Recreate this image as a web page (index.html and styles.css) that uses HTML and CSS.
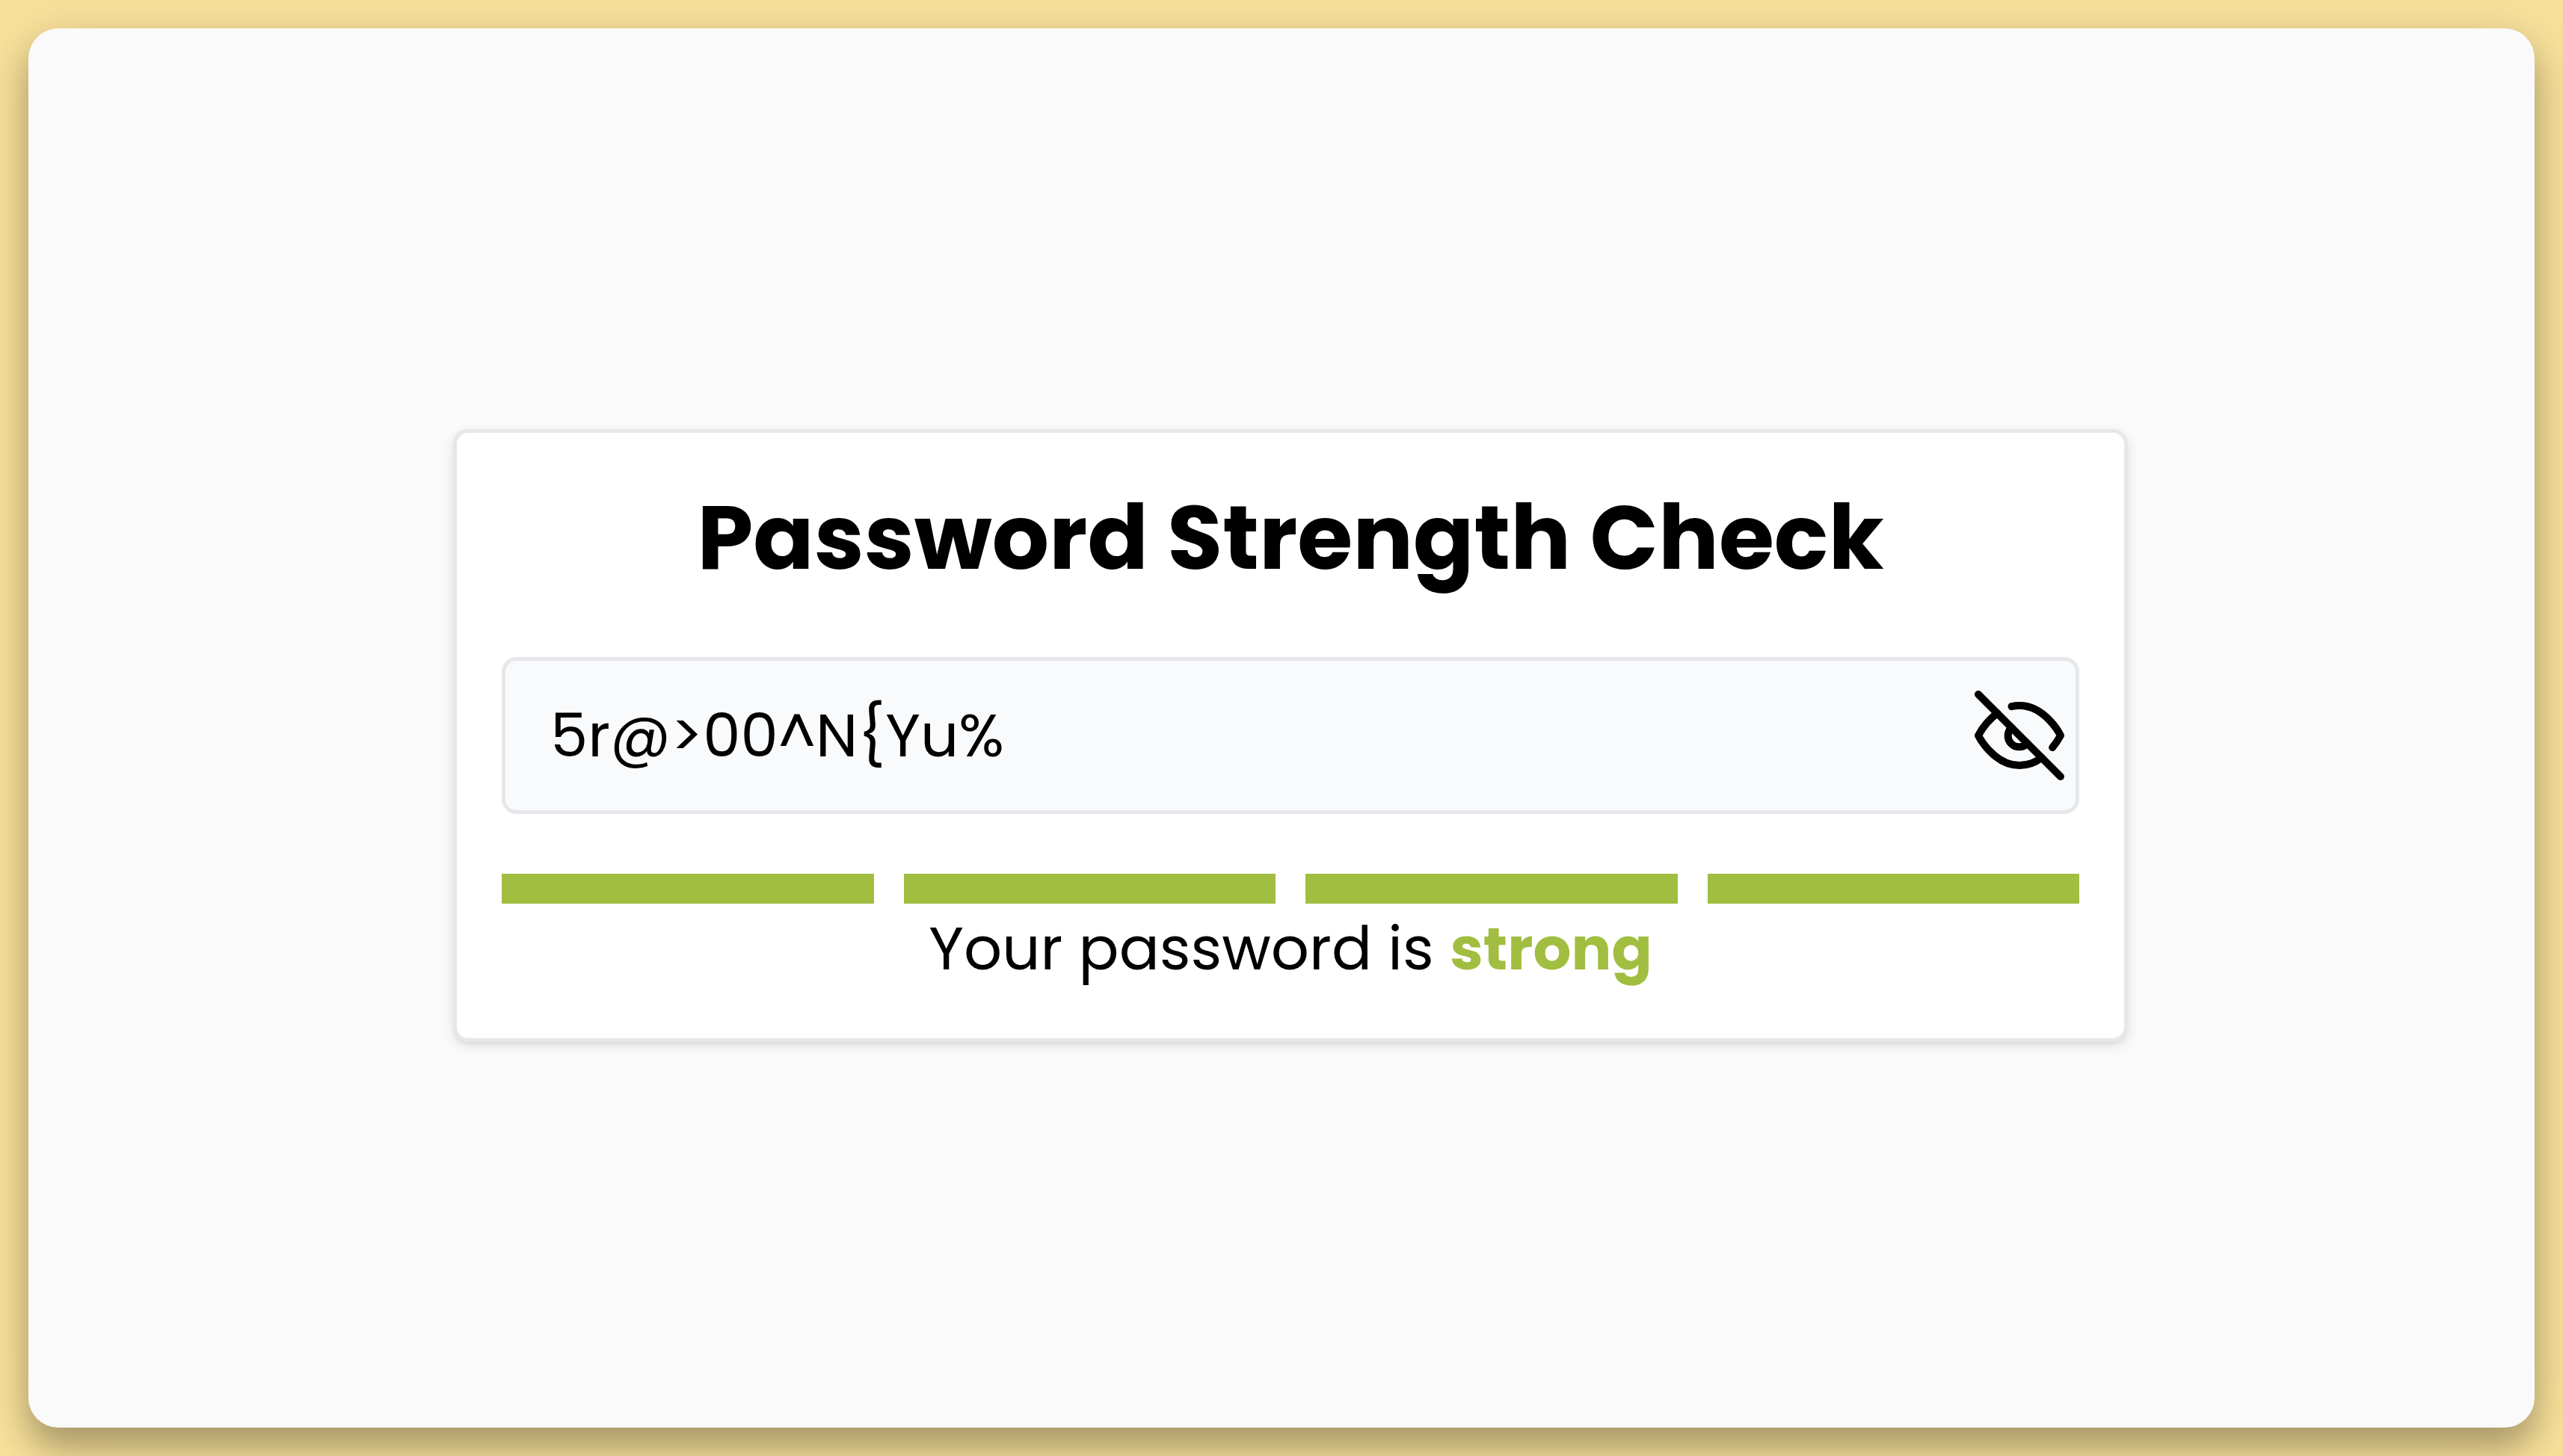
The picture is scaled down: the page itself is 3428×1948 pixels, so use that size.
FILE: index.html
```html
<!DOCTYPE html>
<html lang="en">
<head>
  <meta charset="utf-8">
  <title>Password Strength Check</title>
  <link rel="stylesheet" href="styles.css">
</head>
<body>
  <main class="panel">
    <form class="card">
      <h1 class="title"><label for="password">Password Strength Check</label></h1>
      <div class="field">
        <input class="field-input" id="password" type="text" value="5r@&gt;00^N{Yu%" autocomplete="off" spellcheck="false">
        <button class="field-toggle" type="button" aria-label="Hide password">
          <svg class="icon" viewBox="0 0 24 24" aria-hidden="true">
            <path d="M17.94 17.94A10.07 10.07 0 0 1 12 20c-7 0-11-8-11-8a18.45 18.45 0 0 1 5.06-5.94M9.9 4.24A9.12 9.12 0 0 1 12 4c7 0 11 8 11 8a18.5 18.5 0 0 1-2.16 3.19m-6.72-1.07a3 3 0 1 1-4.24-4.24"/>
            <path d="M1 1l22 22"/>
          </svg>
        </button>
      </div>
      <div class="meter">
        <span class="meter-bar"></span>
        <span class="meter-bar"></span>
        <span class="meter-bar"></span>
        <span class="meter-bar"></span>
      </div>
      <p class="verdict">Your password is <strong class="verdict-level">strong</strong></p>
    </form>
  </main>
</body>
</html>
```
FILE: styles.css
```css
:root {
  --accent: #a1be41;
  --border: #e5e7eb;
}

* {
  box-sizing: border-box;
}

body {
  display: flex;
  min-height: 100vh;
  margin: 0;
  padding: 38px;
  background: #f7e09a;
  color: #000;
  font-family: Poppins, Inter, sans-serif;
  font-size: 80px;
  line-height: 120px;
}

.panel {
  display: flex;
  flex: 1;
  align-items: center;
  justify-content: center;
  padding: 20px 0 0 24px;
  border-radius: 40px;
  background: #fafafa;
  box-shadow: 0 28px 48px rgba(0, 0, 0, 0.3), 0 0 80px rgba(0, 0, 0, 0.06);
}

.card {
  width: 100%;
  max-width: 2240px;
  padding: 60px;
  border: 5px solid var(--border);
  border-radius: 20px;
  background: #fff;
  box-shadow: 0 5px 15px rgba(0, 0, 0, 0.1), 0 5px 10px -5px rgba(0, 0, 0, 0.1);
}

.title {
  margin: 0 0 80px;
  font-size: 120px;
  font-weight: 700;
  line-height: 160px;
  text-align: center;
}

.field {
  display: flex;
  align-items: center;
  height: 210px;
  margin-bottom: 80px;
  padding-right: 15px;
  border: 5px solid var(--border);
  border-radius: 20px;
  background: #f9fafb;
}

.field-input {
  flex: 1;
  min-width: 0;
  height: 100%;
  padding: 0 60px;
  border: 0;
  outline: 0;
  background: transparent;
  color: inherit;
  font: inherit;
}

.field-toggle {
  display: flex;
  padding: 0;
  border: 0;
  background: none;
  color: inherit;
  cursor: pointer;
}

.icon {
  width: 120px;
  height: 120px;
  fill: none;
  stroke: currentColor;
  stroke-width: 2;
  stroke-linecap: round;
  stroke-linejoin: round;
}

.meter {
  display: flex;
  gap: 40px;
}

.meter-bar {
  flex: 1;
  height: 40px;
  background: var(--accent);
}

.verdict {
  margin: 0;
  text-align: center;
}

.verdict-level {
  color: var(--accent);
  font-weight: 700;
}
```
